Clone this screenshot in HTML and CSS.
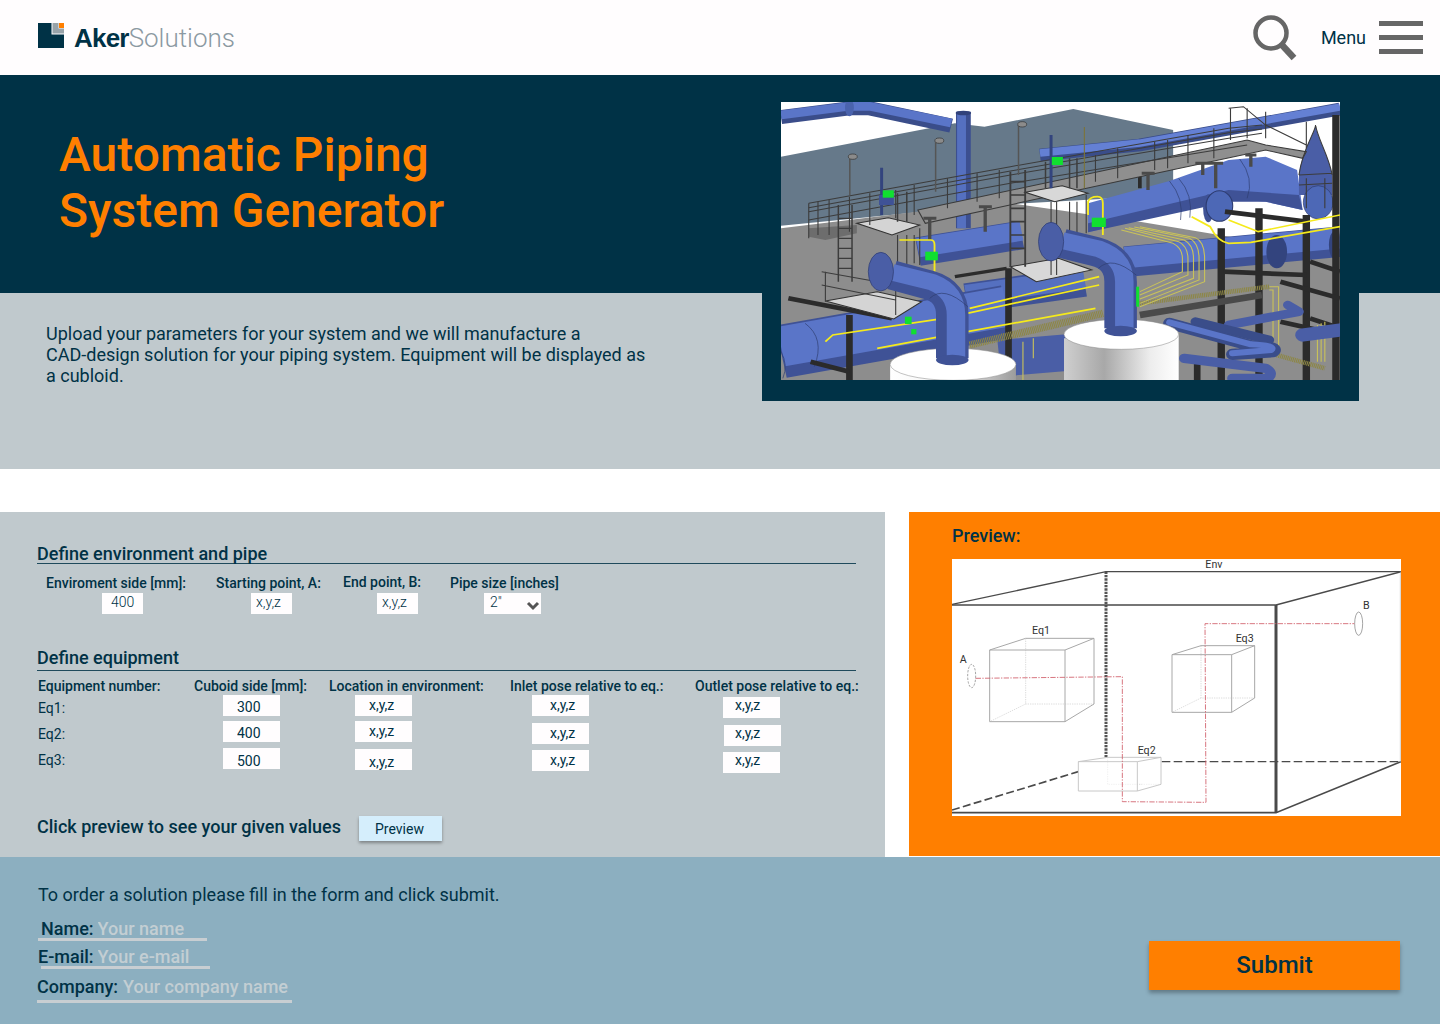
FILE: index.html
```html
<!DOCTYPE html>
<html lang="en">
<head>
    <meta charset="UTF-8">
    <meta name="viewport" content="width=device-width, initial-scale=1.0">
    <title>Automatic Piping System Generator</title>
    <link rel="stylesheet" href="styles.css">
</head>
<body>
    <header class="topbar">
        <a class="logo" href="#">
            <svg class="logo-mark" width="26" height="25" viewBox="0 0 26 25">
                <path d="M0 0H13.5V11.5H26V25H0Z" fill="#003246"/>
                <path d="M14.5 0H20.5V5.5H26V10.5H14.5Z" fill="#98a3a9"/>
                <rect x="21" y="0" width="5" height="5" fill="#ff7f00"/>
            </svg>
            <span class="logo-text"><b>Aker</b>Solutions</span>
        </a>
        <div class="topbar-right">
            <svg class="search-icon" width="44" height="46" viewBox="0 0 44 46">
                <circle cx="18" cy="18" r="15.5" fill="none" stroke="#666" stroke-width="4.5"/>
                <path d="M29 30L41 43" stroke="#666" stroke-width="6.5" fill="none"/>
            </svg>
            <span class="menu-label">Menu</span>
            <div class="burger"><span></span><span></span><span></span></div>
        </div>
    </header>

    <section class="hero">
        <div class="hero-top">
            <h1>Automatic Piping<br>System Generator</h1>
        </div>
        <div class="hero-bottom">
            <p>Upload your parameters for your system and we will manufacture a<br>CAD-design solution for your piping system. Equipment will be displayed as<br>a cubloid.</p>
        </div>
        <div class="hero-frame">
            <svg class="plant" width="559" height="278" viewBox="30 21 1511 834" preserveAspectRatio="none">
                <defs>
                    <linearGradient id="tank" x1="0" x2="1" y1="0" y2="0">
                        <stop offset="0" stop-color="#ffffff"/>
                        <stop offset="0.45" stop-color="#f4f4f4"/>
                        <stop offset="1" stop-color="#9c9c9c"/>
                    </linearGradient>
                    <linearGradient id="tank2" x1="0" x2="1" y1="0" y2="0">
                        <stop offset="0" stop-color="#cfcfcf"/>
                        <stop offset="0.35" stop-color="#a8a8a8"/>
                        <stop offset="0.75" stop-color="#ededed"/>
                        <stop offset="1" stop-color="#ffffff"/>
                    </linearGradient>
                </defs>
                <rect x="30" y="21" width="1511" height="834" fill="#fff"/>
                <!-- building -->
                <path d="M30 185L500 85L580 95L820 42L1090 105L1090 300L600 330L30 392Z" fill="#66798a"/>
                <path d="M30 400L620 320L1000 380L1541 480V855H30Z" fill="#8d8d8d"/>
                <!-- far pipes -->
                <g fill="none" stroke-linecap="butt">
                    <path d="M30 66L215 40H270L490 92" stroke="#3a4d8a" stroke-width="42"/>
                    <path d="M30 60L215 34H270L490 84" stroke="#5a75c8" stroke-width="26"/>
                    <path d="M730 180L1000 150L1541 42" stroke="#3a4d8a" stroke-width="38"/>
                    <path d="M730 174L1000 144L1541 36" stroke="#6480d4" stroke-width="22"/>
                    <path d="M523 50V400" stroke="#3c4f90" stroke-width="40"/>
                    <path d="M518 50V400" stroke="#5570c0" stroke-width="24"/>
                    <path d="M960 500L1541 440" stroke="#3f5296" stroke-width="92"/>
                    <path d="M960 488L1541 428" stroke="#5a75c8" stroke-width="64"/>
                    <path d="M400 470L680 420" stroke="#3f5296" stroke-width="86"/>
                    <path d="M400 458L680 408" stroke="#5a75c8" stroke-width="58"/>
                    <path d="M530 610L850 560" stroke="#3f5296" stroke-width="90"/>
                    <path d="M530 600L850 550" stroke="#5570c0" stroke-width="60"/>
                    <path d="M30 770L640 650" stroke="#3f5296" stroke-width="160"/>
                    <path d="M30 755L640 635" stroke="#5a75c8" stroke-width="120"/>
                    <path d="M620 790L830 770" stroke="#4a5ea6" stroke-width="110"/>
                </g>
                <path d="M95 685Q150 730 120 815" fill="none" stroke="#2f3f72" stroke-width="2"/>
                <path d="M30 770Q50 810 35 850" fill="none" stroke="#2f3f72" stroke-width="2"/>
                <ellipse cx="215" cy="38" rx="12" ry="26" fill="#4a63ad"/>
                <ellipse cx="523" cy="54" rx="21" ry="7" fill="#31427a"/>
                <!-- main pipe -->
                <path d="M860 325L1080 258L1240 195L1340 185L1425 225L1440 345L1340 320L1240 310L860 412Z" fill="#5a75c8"/>
                <path d="M860 385L1240 285L1430 300L1440 345L1340 320L1240 320L860 412Z" fill="#3f5296"/>
                <path d="M1080 258Q1120 310 1110 375M1105 250Q1145 300 1135 368M1270 192Q1310 250 1290 310" fill="none" stroke="#2f3f72" stroke-width="2"/>
                <ellipse cx="1185" cy="340" rx="14" ry="42" fill="#3f5296"/>
                <ellipse cx="1215" cy="333" rx="36" ry="46" fill="#4d68b6" stroke="#2d3c70" stroke-width="3"/>
                <!-- valve -->
                <path d="M1430 240C1440 160 1475 110 1475 90C1480 130 1510 180 1520 240V300H1430Z" fill="#4a5ea6"/>
                <ellipse cx="1482" cy="322" rx="40" ry="50" fill="#4d68b6" stroke="#2d3c70" stroke-width="2"/>
                <ellipse cx="1370" cy="470" rx="28" ry="50" fill="#33447e"/>
                <ellipse cx="1525" cy="450" rx="14" ry="40" fill="#33447e"/>
                <!-- steel -->
                <g fill="none" stroke="#2b2b2b">
                    <path d="M1220 400V855M1322 340V855M1450 360V855M1530 60V855" stroke-width="20"/>
                    <path d="M645 520V855M215 660V855M1155 800V855" stroke-width="18"/>
                    <path d="M1225 530L1450 540M1230 350L1450 380M1460 500L1541 530M1380 560L1541 610M1460 670L1541 700M1380 680L1541 720" stroke-width="14"/>
                    <path d="M50 610L330 670M110 800L215 830" stroke-width="14"/>
                    <path d="M1000 660L1330 600" stroke="#4a4a4a" stroke-width="20"/>
                    <path d="M500 545L640 520M1000 240V280" stroke-width="10"/>
                </g>
                <!-- platforms -->
                <path d="M400 345L1290 135L1340 150L1450 170L1440 190L1340 165L1000 245L420 385Z" fill="#8f8f8f" stroke="#3a3a3a" stroke-width="3"/>
                <path d="M235 385L320 368L405 390L330 420Z" fill="#d4d4d4" stroke="#333" stroke-width="3"/>
                <path d="M690 292L790 272L860 295L770 320Z" fill="#d8d8d8" stroke="#333" stroke-width="3"/>
                <path d="M650 515L780 490L870 525L720 560Z" fill="#d8d8d8" stroke="#333" stroke-width="3"/>
                <path d="M150 618L290 590L410 620L335 672Z" fill="#d4d4d4" stroke="#333" stroke-width="3"/>
                <path d="M105 400V425L150 435L235 415V390Z" fill="#6d6d6d"/>
                <!-- hangers -->
                <g fill="none" stroke="#4a4a4a" stroke-width="9">
                    <path d="M1005 235H1040M1022 235V285M1150 205H1225M1170 205V240M1205 205V280M1285 180H1315M1300 180V215M415 370H450M432 370V435M565 335H600M582 335V410"/>
                </g>
                <!-- railings -->
                <g fill="none" stroke="#3c3c3c" stroke-width="3">
                    <path d="M105 325L650 215L1240 100L1330 90M105 338L650 228L1240 113L1330 102M105 350L650 240L1240 130L1330 115M105 375L650 265L1290 150"/>
                    <path d="M105 325V430M130 320V420M160 315V420M215 305V410M270 295V390M340 285V370M390 270V360M480 250V340M560 235V320M620 225V310M880 180V260M940 160V250M1040 140V225M1075 135V220M1130 120V205M1200 100V190M1245 40V135M1290 40V130M1340 50V130"/>
                    <path d="M185 330V560M222 330V560M185 370H222M185 400H222M185 430H222M185 460H222M185 490H222M185 520H222" stroke-width="4"/>
                    <path d="M650 230V515M690 225V515M650 260H690M650 300H690M650 340H690M650 380H690M650 420H690M650 460H690" stroke-width="5"/>
                    <path d="M345 420V520M370 420V510M390 420V505M405 400V510M760 320V540M775 320V540M810 320V415M830 320V415M855 300V415"/>
                    <path d="M140 530L340 570M140 570L340 615M150 530V620M340 570V660"/>
                    <path d="M810 190V280M830 190V280M745 200V280M370 290V380M345 295V380" stroke-width="4"/>
                    <path d="M1240 40L1280 35L1340 90L1450 150M1450 80V160"/>
                    <path d="M1430 240C1440 160 1475 110 1475 90C1480 130 1510 180 1520 240M1430 270L1520 265M1430 240L1520 235M1450 250V340M1500 250V340"/>
                </g>
                <!-- lamps -->
                <g fill="none" stroke="#555" stroke-width="4">
                    <path d="M216 190V300M448 140V290M672 90V240"/>
                </g>
                <g fill="#8b8b8b" stroke="#333" stroke-width="2">
                    <ellipse cx="224" cy="185" rx="12" ry="8"/>
                    <ellipse cx="458" cy="137" rx="12" ry="8"/>
                    <ellipse cx="682" cy="88" rx="12" ry="8"/>
                </g>
                <path d="M760 120V280M302 218V360" stroke="#33447e" stroke-width="8" fill="none"/>
                <path d="M850 96V280" stroke="#7c7438" stroke-width="3" fill="none"/>
                <path d="M295 300H335V330H295Z" fill="#3f5296"/>
                <!-- cable trays -->
                <g fill="none" stroke="#8d8745" stroke-dasharray="3 2">
                    <path d="M540 750L900 655" stroke-width="22"/>
                    <path d="M1000 625L1350 575" stroke-width="14"/>
                    <path d="M1370 780L1500 820" stroke-width="14"/>
                </g>
                <!-- yellow cables -->
                <g fill="none" stroke="#f5ea1c" stroke-width="5">
                    <path d="M150 740L170 720L470 670L890 570"/>
                    <path d="M290 760L460 725L880 640"/>
                    <path d="M540 640L890 545"/>
                    <path d="M350 435H435Q445 435 445 450V530"/>
                    <path d="M860 360V320Q865 305 885 305Q900 305 900 325V420"/>
                    <path d="M1140 365L1190 395Q1210 440 1240 445L1300 442L1541 395"/>
                    <path d="M1240 375L1320 410L1541 360"/>
                </g>
                <g fill="none" stroke="#c9c25a" stroke-width="3">
                    <path d="M950 405L1090 445Q1115 460 1115 490V530L1000 590"/>
                    <path d="M960 400L1105 440Q1130 455 1130 490V540L1000 600"/>
                    <path d="M970 398L1120 435Q1145 450 1145 490V550L1000 612"/>
                    <path d="M985 396L1135 430Q1160 445 1160 490V555L1000 625"/>
                    <path d="M1000 395L1150 428Q1175 440 1175 490V560L1000 635"/>
                    <path d="M1350 575H1375V760M1350 585H1360V760"/>
                    <path d="M1480 690V800M1490 685V800M1500 680V800"/>
                    <path d="M684 740V855M712 730V790"/>
                </g>
                <!-- lower right small pipes -->
                <g fill="none" stroke-linejoin="round" stroke-linecap="round">
                    <path d="M1400 630L1430 650L1240 690" stroke="#4a5ea6" stroke-width="26"/>
                    <path d="M1120 790L1340 820Q1365 835 1345 850H1250" stroke="#4a5ea6" stroke-width="28"/>
                    <path d="M1150 680L1350 735" stroke="#3a4d8a" stroke-width="26"/>
                    <path d="M1080 685L1300 752Q1380 755 1360 770L1250 778" stroke="#3a4d8a" stroke-width="34"/>
                    <path d="M1080 682L1300 748Q1370 752 1355 765L1250 775" stroke="#5a75c8" stroke-width="18"/>
                    <path d="M1440 720L1541 705" stroke="#4a5ea6" stroke-width="40"/>
                </g>
                <!-- tanks -->
                <path d="M795 730V855H1105V720Z" fill="url(#tank2)"/>
                <ellipse cx="950" cy="718" rx="155" ry="45" fill="#fff" stroke="#8a8a8a" stroke-width="1.5"/>
                <path d="M325 810V855H665V805Z" fill="url(#tank)"/>
                <ellipse cx="495" cy="808" rx="170" ry="48" fill="#fff" stroke="#8a8a8a" stroke-width="1.5"/>
                <!-- elbows -->
                <g fill="none">
                    <path d="M330 540L430 570Q493 590 493 660V790" stroke="#3f5296" stroke-width="88"/>
                    <path d="M330 532L440 562Q503 590 503 660V790" stroke="#5a75c8" stroke-width="50"/>
                    <path d="M790 445L880 470Q948 490 948 560V700" stroke="#3f5296" stroke-width="88"/>
                    <path d="M790 437L890 462Q958 490 958 560V700" stroke="#5a75c8" stroke-width="50"/>
                    <path d="M432 610Q470 570 535 635M888 520Q925 480 990 540" stroke="#2f3f72" stroke-width="2"/>
                </g>
                <ellipse cx="493" cy="795" rx="44" ry="16" fill="#3f5296"/>
                <ellipse cx="948" cy="708" rx="44" ry="16" fill="#3f5296"/>
                <ellipse cx="300" cy="530" rx="34" ry="58" fill="#4a5ea6" stroke="#2d3c70" stroke-width="2"/>
                <ellipse cx="760" cy="440" rx="34" ry="58" fill="#4a5ea6" stroke="#2d3c70" stroke-width="2"/>
                <!-- green boxes -->
                <g fill="#10e030">
                    <rect x="420" y="470" width="34" height="26"/>
                    <rect x="870" y="368" width="38" height="28"/>
                    <rect x="305" y="286" width="30" height="22"/>
                    <rect x="762" y="186" width="30" height="24"/>
                    <rect x="365" y="665" width="18" height="22"/>
                    <rect x="382" y="702" width="14" height="16"/>
                    <rect x="990" y="575" width="8" height="60"/>
                </g>
            </svg>
        </div>
    </section>

    <section class="work">
        <form class="params">
            <h2 class="section-title section-first">Define environment and pipe</h2>
            <div class="env-row">
                <div class="env-field env-size">
                    <label class="field-label">Enviroment side [mm]:</label>
                    <input class="cell cell-small" value="400">
                </div>
                <div class="env-field env-start">
                    <label class="field-label">Starting point, A:</label>
                    <input class="cell cell-small" value="x,y,z">
                </div>
                <div class="env-field env-end">
                    <label class="field-label">End point, B:</label>
                    <input class="cell cell-small" value="x,y,z">
                </div>
                <div class="env-field env-pipe">
                    <label class="field-label">Pipe size [inches]</label>
                    <div class="select-wrap">
                        <select class="cell cell-select"><option>2"</option></select>
                        <svg class="chevron" width="14" height="10" viewBox="0 0 14 10"><path d="M2 2L7 7L12 2" fill="none" stroke="#555" stroke-width="3"/></svg>
                    </div>
                </div>
            </div>

            <h2 class="section-title section-second">Define equipment</h2>
            <div class="eq-grid">
                <div class="eq-col eq-names">
                    <label class="field-label">Equipment number:</label>
                    <span>Eq1:</span>
                    <span>Eq2:</span>
                    <span>Eq3:</span>
                </div>
                <div class="eq-col eq-cuboid">
                    <label class="field-label">Cuboid side [mm]:</label>
                    <input class="cell" value="300">
                    <input class="cell" value="400">
                    <input class="cell" value="500">
                </div>
                <div class="eq-col eq-location">
                    <label class="field-label">Location in environment:</label>
                    <input class="cell" value="x,y,z">
                    <input class="cell" value="x,y,z">
                    <input class="cell" value="x,y,z">
                </div>
                <div class="eq-col eq-inlet">
                    <label class="field-label">Inlet pose relative to eq.:</label>
                    <input class="cell" value="x,y,z">
                    <input class="cell" value="x,y,z">
                    <input class="cell" value="x,y,z">
                </div>
                <div class="eq-col eq-outlet">
                    <label class="field-label">Outlet pose relative to eq.:</label>
                    <input class="cell" value="x,y,z">
                    <input class="cell" value="x,y,z">
                    <input class="cell" value="x,y,z">
                </div>
            </div>

            <div class="preview-row">
                <span>Click preview to see your given values</span>
                <button type="button" class="preview-btn">Preview</button>
            </div>
        </form>

        <aside class="preview-panel">
            <h3>Preview:</h3>
            <svg class="diagram" width="449" height="257" viewBox="21 117 1347 771">
                <rect x="21" y="117" width="1347" height="771" fill="#fff"/>
                <g fill="none" stroke="#4a4a4a">
                    <path d="M483 155L483 712" stroke="#555" stroke-width="9" stroke-dasharray="7 3"/>
                    <path d="M21 253L483 155H1368" stroke-width="4"/>
                    <path d="M21 255H993L1368 155" stroke-width="4.5"/>
                    <path d="M21 878H993L1368 725" stroke-width="5"/>
                    <path d="M993 255V878" stroke-width="9"/>
                    <path d="M1366 155V725" stroke="#bbb" stroke-width="2"/>
                    <path d="M650 725H1368" stroke-width="4" stroke-dasharray="26 10"/>
                    <path d="M21 870L400 755" stroke-width="5" stroke-dasharray="24 10"/>
                </g>
                <g fill="none" stroke="#a8a8a8" stroke-width="3">
                    <path d="M134 390H360V605H134ZM134 390L242 355H447L360 390M447 355V552L360 605"/>
                    <path d="M681 404H860V577H681ZM681 404L768 377H929L860 404M929 377V534L860 577"/>
                </g>
                <g fill="none" stroke="#bbb" stroke-width="1.5" stroke-dasharray="4 3">
                    <path d="M242 355V552H447M242 552L134 605"/>
                    <path d="M768 377V534H929M768 534L681 577"/>
                    <path d="M488 712V793H648"/>
                </g>
                <path d="M400 725H577V813H400ZM400 725L488 712H648L577 725M648 712V793L577 813" fill="#fff" fill-opacity="0.6" stroke="#c8c8c8" stroke-width="3"/>
                <ellipse cx="80" cy="468" rx="12" ry="35" fill="none" stroke="#777" stroke-width="2" stroke-dasharray="7 4"/>
                <ellipse cx="1241" cy="311" rx="12" ry="35" fill="none" stroke="#777" stroke-width="2"/>
                <path d="M92 475L532 470V845L783 847L780 311H1228" fill="none" stroke="#cf5a66" stroke-width="2.5" stroke-dasharray="16 4 4 4"/>
                <g class="diagram-text">
                    <text x="781" y="145">Env</text>
                    <text x="44" y="430">A</text>
                    <text x="1254" y="266">B</text>
                    <text x="261" y="342">Eq1</text>
                    <text x="872" y="366">Eq3</text>
                    <text x="578" y="701">Eq2</text>
                </g>
            </svg>
        </aside>
    </section>

    <footer class="order">
        <div class="order-form">
            <p>To order a solution please fill in the form and click submit.</p>
            <div class="order-line line-name">
                <label>Name:</label>
                <input placeholder="Your name">
            </div>
            <div class="order-line line-mail">
                <label>E-mail:</label>
                <input placeholder="Your e-mail">
            </div>
            <div class="order-line line-company">
                <label>Company:</label>
                <input placeholder="Your company name">
            </div>
        </div>
        <button type="button" class="submit-btn">Submit</button>
    </footer>
</body>
</html>
```

FILE: styles.css
```css
* {
    box-sizing: border-box;
}

body {
    margin: 0;
    width: 1440px;
    height: 1024px;
    overflow: hidden;
    font-family: Roboto, "Liberation Sans", sans-serif;
    color: #003246;
    background-color: #ffffff;
}

.topbar {
    height: 75px;
    display: flex;
    align-items: center;
    justify-content: space-between;
    padding: 0 17px 0 38px;
    background-color: #fffdfe;
}

.logo {
    display: flex;
    align-items: flex-start;
    gap: 10px;
    margin-top: 1px;
    text-decoration: none;
}

.logo-mark {
    flex-shrink: 0;
}

.logo-text {
    font-size: 26px;
    line-height: 30px;
    font-weight: 300;
    color: #8b99a2;
    letter-spacing: 0;
}

.logo-text b {
    font-family: "Liberation Sans", sans-serif;
    font-weight: 700;
    color: #003246;
    letter-spacing: -0.8px;
}

.topbar-right {
    display: flex;
    align-items: center;
}

.search-icon {
    margin-right: 24px;
    margin-top: 1px;
}

.menu-label {
    font-size: 18px;
    margin-right: 13px;
}

.burger {
    width: 44px;
    display: flex;
    flex-direction: column;
    gap: 9px;
}

.burger span {
    height: 5px;
    background-color: #666;
}

.hero {
    position: relative;
}

.hero-top {
    height: 218px;
    padding: 52px 0 0 59px;
    background-color: #003246;
}

.hero-top h1 {
    margin: 0;
    font-size: 48px;
    line-height: 56px;
    font-weight: 500;
    color: #ff7f00;
}

.hero-bottom {
    height: 176px;
    padding: 30px 0 0 46px;
    background-color: #c0c9cd;
}

.hero-bottom p {
    margin: 0;
    font-size: 18px;
    line-height: 21px;
}

.hero-frame {
    position: absolute;
    left: 762px;
    top: 0;
    width: 597px;
    height: 326px;
    padding: 27px 19px 0;
    background-color: #003246;
}

.plant {
    display: block;
}

.work {
    display: flex;
    gap: 24px;
    height: 345px;
    margin-top: 43px;
}

.params {
    width: 885px;
    display: flex;
    flex-direction: column;
    padding: 29px 29px 16px 37px;
    background-color: #c0c9cd;
}

.section-title {
    margin: 0;
    font-size: 18px;
    font-weight: 500;
    border-bottom: 1px solid #1f4a5c;
}

.section-first {
    padding-top: 4px;
    line-height: 18px;
}

.section-second {
    margin-top: 34px;
    padding-bottom: 2px;
    line-height: 20px;
}

.field-label {
    display: block;
    font-size: 14px;
    line-height: 17px;
    font-weight: 500;
    white-space: nowrap;
}

.cell {
    display: block;
    width: 57px;
    height: 21px;
    padding: 0 0 0 14px;
    border: none;
    border-radius: 0;
    outline: none;
    font-family: inherit;
    font-size: 14px;
    color: #003246;
    background-color: #fffdfe;
}

.cell-small {
    width: 41px;
    padding-left: 5px;
    padding-bottom: 4px;
    font-weight: 300;
}

.env-row {
    display: grid;
    grid-template-columns: 170px 127px 107px auto;
    padding: 11px 0 0 9px;
}

.env-field .field-label {
    margin-bottom: 1px;
}

.env-size .cell {
    margin-left: 56px;
    padding-left: 9px;
}

.env-start .cell {
    margin-left: 35px;
}

.env-end .field-label {
    margin-top: -1px;
    margin-bottom: 2px;
}

.env-end .cell {
    margin-left: 34px;
}

.select-wrap {
    position: relative;
    width: 57px;
    margin-left: 34px;
}

.cell-select {
    appearance: none;
    padding-left: 6px;
    padding-bottom: 4px;
    font-weight: 300;
}

.chevron {
    position: absolute;
    right: 1px;
    top: 8px;
}

.eq-grid {
    display: grid;
    grid-template-columns: 156px 135px 181px 185px auto;
    padding: 7px 0 0 1px;
}

.eq-col {
    display: flex;
    flex-direction: column;
    gap: 5px;
}

.eq-col .field-label {
    margin-bottom: -5px;
}

.eq-names {
    gap: 9px;
}

.eq-names .field-label {
    margin-bottom: -4px;
}

.eq-names span {
    font-size: 14px;
    line-height: 17px;
}

.eq-cuboid .cell {
    margin-left: 29px;
    padding-top: 2px;
}

.eq-cuboid .cell:last-child {
    margin-top: 1px;
    padding-top: 4px;
}

.eq-location .cell {
    margin-left: 26px;
    padding-bottom: 2px;
}

.eq-location .cell:last-child {
    margin-top: 2px;
    padding-top: 4px;
    padding-bottom: 0;
}

.eq-inlet .cell {
    margin-left: 22px;
    padding-left: 18px;
    padding-bottom: 2px;
}

.eq-inlet .cell:nth-child(3) {
    margin-top: 2px;
}

.eq-inlet .cell:last-child {
    margin-top: 1px;
}

.eq-outlet .cell {
    margin-left: 28px;
    padding-left: 12px;
    padding-bottom: 6px;
}

.eq-outlet .cell:nth-child(2) {
    margin-top: 2px;
}

.eq-outlet .cell:nth-child(3) {
    margin-top: 2px;
    margin-left: 29px;
    padding-left: 11px;
}

.eq-outlet .cell:last-child {
    margin-top: 1px;
}

.preview-row {
    display: flex;
    align-items: center;
    gap: 18px;
    margin-top: auto;
    font-size: 18px;
    font-weight: 500;
}

.preview-row span {
    margin-bottom: 4px;
}

.preview-btn {
    width: 83px;
    height: 25px;
    padding: 0 2px 0 0;
    border: none;
    font-family: inherit;
    font-size: 14px;
    color: #003246;
    background-color: #d5eefc;
    box-shadow: 0 2px 3px rgba(0, 0, 0, 0.35);
}

.preview-panel {
    width: 531px;
    height: 344px;
    padding: 13px 0 0 43px;
    background-color: #ff7f00;
}

.preview-panel h3 {
    margin: 0 0 12px;
    font-size: 18px;
    line-height: 22px;
    font-weight: 500;
}

.diagram {
    display: block;
}

.diagram-text text {
    font-family: Roboto, sans-serif;
    font-size: 32px;
    fill: #333;
}

.order {
    height: 167px;
    display: flex;
    justify-content: space-between;
    padding: 27px 40px 0 37px;
    background-color: #8cafc0;
}

.order-form p {
    margin: 0 0 11px 1px;
    font-size: 18px;
    line-height: 22px;
}

.order-line {
    display: flex;
    align-items: baseline;
    gap: 4px;
    height: 24px;
    padding-top: 1px;
    font-size: 18px;
    line-height: 21px;
    font-weight: 500;
    border-bottom: 3px solid #c8ced2;
}

.order-line input {
    flex: 1;
    min-width: 0;
    padding: 0;
    border: none;
    outline: none;
    font-family: inherit;
    font-size: 18px;
    font-weight: 500;
    line-height: 21px;
    background: transparent;
}

.order-line input::placeholder {
    color: #c3ced3;
    opacity: 1;
}

.line-name {
    width: 169px;
    margin-left: 1px;
    padding-left: 3px;
}

.line-mail {
    width: 169px;
    margin: 4px 0 0 4px;
}

.line-mail label {
    margin-left: -3px;
}

.line-company {
    width: 255px;
    height: 27px;
    margin-top: 7px;
    padding-top: 0;
    gap: 5px;
}

.submit-btn {
    width: 251px;
    height: 49px;
    margin-top: 57px;
    padding: 0 0 2px;
    border: none;
    font-family: inherit;
    font-size: 24px;
    font-weight: 500;
    color: #003246;
    background-color: #ff7f00;
    box-shadow: 0 3px 4px rgba(0, 0, 0, 0.3);
}
```
